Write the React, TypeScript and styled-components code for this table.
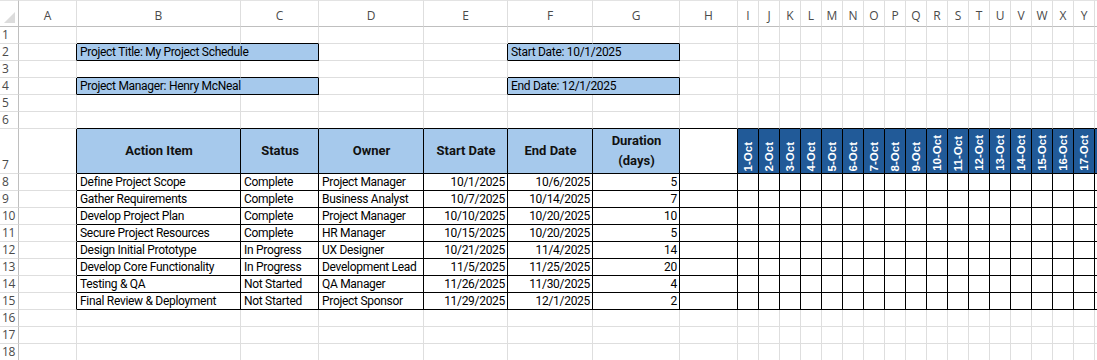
import React from "react";
import styled, { createGlobalStyle } from "styled-components";

const GlobalStyle = createGlobalStyle`
  html, body {
    margin: 0;
    padding: 0;
    background: #fff;
  }
  body {
    font-family: Roboto, "Liberation Sans", sans-serif;
  }
`;

type Fill = "none" | "light" | "dark";
type Align = "left" | "right" | "center";

interface CellSpec {
  text?: React.ReactNode;
  align?: Align;
  fill?: Fill;
  span?: number;
  kind?: "body" | "head" | "date";
}

const GRID = "#dedede";
const HEAD_LINE = "#bfbfbf";
const fills: Record<Fill, string> = {
  none: "#fff",
  light: "#a6c9ec",
  dark: "#215a98",
};

// Z is only a sliver at the right edge, so it gets no letter
const letters = "ABCDEFGHIJKLMNOPQRSTUVWXYZ".split("");
const colWidths = [58, 164, 78, 105, 84, 85, 87, 58, ...Array(17).fill(21), 40];
const rowHeights = Array.from({ length: 18 }, (_, i) => (i === 6 ? 45 : 17));

const Sheet = styled.div`
  display: grid;
  grid-template-columns: 19px ${colWidths.map((w) => `${w}px`).join(" ")};
  grid-template-rows: 27px ${rowHeights.map((h) => `${h}px`).join(" ")};
  width: 1097px;
  height: 360px;
  overflow: hidden;
`;

const Corner = styled.div`
  box-sizing: border-box;
  border-top: 1px solid #e3e3e3;
  border-right: 1px solid ${HEAD_LINE};
  border-bottom: 1px solid ${HEAD_LINE};
  position: relative;
  svg {
    position: absolute;
    right: 3px;
    bottom: 3px;
  }
`;

const ColHead = styled.div`
  box-sizing: border-box;
  border-top: 1px solid #e3e3e3;
  border-right: 1px solid ${GRID};
  border-bottom: 1px solid ${HEAD_LINE};
  display: flex;
  align-items: flex-end;
  justify-content: center;
  padding-bottom: 2px;
  font-family: "Open Sans", "Noto Sans", sans-serif;
  font-size: 12px;
  line-height: 16px;
  color: #4a4a4a;
  overflow: hidden;
`;

const RowHead = styled.div`
  box-sizing: border-box;
  border-right: 1px solid ${HEAD_LINE};
  border-bottom: 1px solid ${GRID};
  display: flex;
  align-items: flex-end;
  padding-left: 2px;
  font-family: "Open Sans", "Noto Sans", sans-serif;
  font-size: 12px;
  line-height: 16px;
  color: #4a4a4a;
  letter-spacing: -0.3px;
`;

const Cell = styled.div<{
  $fill: Fill;
  $right: boolean;
  $bottom: boolean;
  $align: Align;
  $span: number;
}>`
  box-sizing: border-box;
  grid-column: span ${(p) => p.$span};
  border-right: 1px solid ${(p) => (p.$right ? "#000" : GRID)};
  border-bottom: 1px solid ${(p) => (p.$bottom ? "#000" : GRID)};
  background: ${(p) => fills[p.$fill]};
  display: flex;
  align-items: flex-end;
  justify-content: ${(p) =>
    p.$align === "right" ? "flex-end" : p.$align === "center" ? "center" : "flex-start"};
  padding: 0 2px 0 3px;
  font-size: 12px;
  letter-spacing: -0.3px;
  line-height: 15px;
  color: #000;
  white-space: nowrap;
  overflow: hidden;
`;

const HeadCell = styled(Cell)`
  align-items: center;
  text-align: center;
  white-space: normal;
  font-size: 13px;
  font-weight: 700;
  letter-spacing: 0;
  line-height: 20px;
  color: #111;
`;

const DateCell = styled(Cell)`
  padding: 0 0 2px;
`;

const DateLabel = styled.span`
  writing-mode: vertical-rl;
  transform: rotate(180deg);
  font-family: "Liberation Sans", Arial, sans-serif;
  font-size: 11.5px;
  font-weight: 700;
  letter-spacing: 0;
  line-height: 13px;
  color: #fff;
`;

const tasks: [string, string, string, string, string, number][] = [
  ["Define Project Scope", "Complete", "Project Manager", "10/1/2025", "10/6/2025", 5],
  ["Gather Requirements", "Complete", "Business Analyst", "10/7/2025", "10/14/2025", 7],
  ["Develop Project Plan", "Complete", "Project Manager", "10/10/2025", "10/20/2025", 10],
  ["Secure Project Resources", "Complete", "HR Manager", "10/15/2025", "10/20/2025", 5],
  ["Design Initial Prototype", "In Progress", "UX Designer", "10/21/2025", "11/4/2025", 14],
  ["Develop Core Functionality", "In Progress", "Development Lead", "11/5/2025", "11/25/2025", 20],
  ["Testing & QA", "Not Started", "QA Manager", "11/26/2025", "11/30/2025", 4],
  ["Final Review & Deployment", "Not Started", "Project Sponsor", "11/29/2025", "12/1/2025", 2],
];

// cell contents keyed by "row:col" (col 0 = A)
const specs: Record<string, CellSpec> = {
  "2:1": { text: "Project Title: My Project Schedule", fill: "light", span: 2 },
  "2:5": { text: "Start Date: 10/1/2025", fill: "light", span: 2 },
  "4:1": { text: "Project Manager: Henry McNeal", fill: "light", span: 2 },
  "4:5": { text: "End Date: 12/1/2025", fill: "light", span: 2 },
  "7:1": { text: "Action Item", kind: "head", fill: "light", align: "center" },
  "7:2": { text: "Status", kind: "head", fill: "light", align: "center" },
  "7:3": { text: "Owner", kind: "head", fill: "light", align: "center" },
  "7:4": { text: "Start Date", kind: "head", fill: "light", align: "center" },
  "7:5": { text: "End Date", kind: "head", fill: "light", align: "center" },
  "7:6": {
    text: (
      <>
        Duration
        <br />
        (days)
      </>
    ),
    kind: "head",
    fill: "light",
    align: "center",
  },
};

for (let d = 0; d < 18; d++) {
  specs[`7:${8 + d}`] = {
    text: d < 17 ? `${d + 1}-Oct` : "",
    kind: "date",
    fill: "dark",
    align: "center",
  };
}

tasks.forEach(([item, status, owner, start, end, days], i) => {
  const r = 8 + i;
  specs[`${r}:1`] = { text: item };
  specs[`${r}:2`] = { text: status };
  specs[`${r}:3`] = { text: owner };
  specs[`${r}:4`] = { text: start, align: "right" };
  specs[`${r}:5`] = { text: end, align: "right" };
  specs[`${r}:6`] = { text: String(days), align: "right" };
});

const boxed = (r: number, c: number) =>
  ((r === 2 || r === 4) && ((c >= 1 && c <= 2) || (c >= 5 && c <= 6))) ||
  (r >= 7 && r <= 15 && c >= 1 && c <= 25);

const Triangle: React.FC = () => (
  <svg width="11" height="11" viewBox="0 0 11 11">
    <polygon points="11,0 11,11 0,11" fill="#dcdcdc" />
  </svg>
);

function renderRow(r: number) {
  const out: React.ReactNode[] = [<RowHead key={`h${r}`}>{r}</RowHead>];
  let c = 0;
  while (c < letters.length) {
    const spec = specs[`${r}:${c}`] ?? {};
    const span = spec.span ?? 1;
    const last = c + span - 1;
    let bottom = false;
    for (let k = c; k <= last; k++) if (boxed(r, k) || boxed(r + 1, k)) bottom = true;
    const props = {
      key: `${r}:${c}`,
      $fill: spec.fill ?? "none",
      $right: boxed(r, last) || boxed(r, last + 1),
      $bottom: bottom,
      $align: spec.align ?? "left",
      $span: span,
    };
    if (spec.kind === "head") out.push(<HeadCell {...props}>{spec.text}</HeadCell>);
    else if (spec.kind === "date")
      out.push(
        <DateCell {...props}>
          <DateLabel>{spec.text}</DateLabel>
        </DateCell>
      );
    else out.push(<Cell {...props}>{spec.text}</Cell>);
    c += span;
  }
  return out;
}

export default function App() {
  return (
    <>
      <GlobalStyle />
      <Sheet>
        <Corner>
          <Triangle />
        </Corner>
        {letters.map((l, i) => (
          <ColHead key={l}>{i < 25 ? l : ""}</ColHead>
        ))}
        {rowHeights.map((_, i) => renderRow(i + 1))}
      </Sheet>
    </>
  );
}
